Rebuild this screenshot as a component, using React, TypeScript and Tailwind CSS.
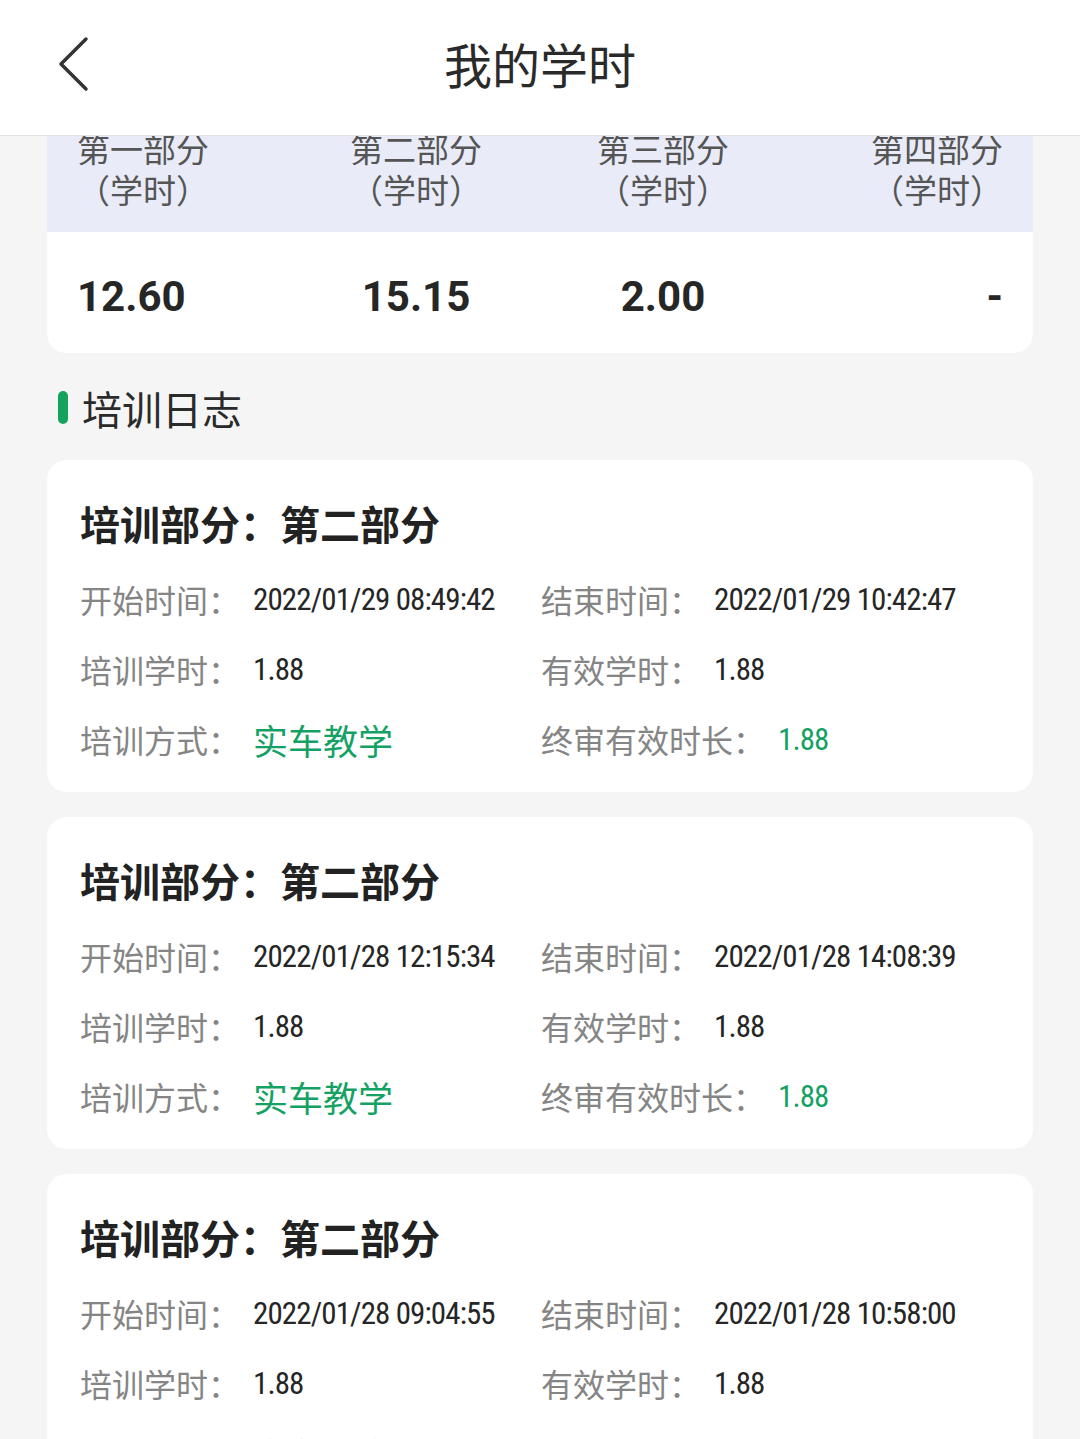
import React from "react";

const CJK = '"Noto Sans CJK SC", "Noto Sans", sans-serif';
const NUM = '"Roboto Condensed", "Liberation Sans Narrow", "DejaVu Sans Condensed", Roboto, "Noto Sans CJK SC", sans-serif';

type Log = { start: string; end: string; hours: string; valid: string; mode: string; final: string };

const logs: Log[] = [
  { start: "2022/01/29 08:49:42", end: "2022/01/29 10:42:47", hours: "1.88", valid: "1.88", mode: "实车教学", final: "1.88" },
  { start: "2022/01/28 12:15:34", end: "2022/01/28 14:08:39", hours: "1.88", valid: "1.88", mode: "实车教学", final: "1.88" },
  { start: "2022/01/28 09:04:55", end: "2022/01/28 10:58:00", hours: "1.88", valid: "1.88", mode: "实车教学", final: "1.88" },
];

function Field({ label, value, green, numeric = true }: { label: string; value: string; green?: boolean; numeric?: boolean }) {
  return (
    <div className="flex h-[70px] items-center whitespace-nowrap">
      <span className="text-[32px] leading-none text-[#858585]" style={{ fontFamily: CJK }}>
        {label}：
      </span>
      <span
        className={`ml-[13px] leading-none ${green ? "text-[#14a264]" : "text-[#262626]"} ${numeric ? "text-[31px] tracking-[-0.9px]" : "text-[35px]"}`}
        style={{ fontFamily: numeric ? NUM : CJK }}
      >
        {value}
      </span>
    </div>
  );
}

function LogCard({ log }: { log: Log }) {
  return (
    <div className="rounded-[20px] bg-white pl-[33px] pr-[20px] pt-[39px] pb-[18px]">
      <div className="h-[48px] text-[40px] font-bold leading-[48px] text-[#222]" style={{ fontFamily: CJK }}>
        培训部分：第二部分
      </div>
      <div className="mt-[17px] grid grid-cols-[461px_1fr]">
        <Field label="开始时间" value={log.start} />
        <Field label="结束时间" value={log.end} />
        <Field label="培训学时" value={log.hours} />
        <Field label="有效学时" value={log.valid} />
        <Field label="培训方式" value={log.mode} green numeric={false} />
        <Field label="终审有效时长" value={log.final} green />
      </div>
    </div>
  );
}

export default function App() {
  const cols = [
    { name: "第一部分", value: "12.60", align: "text-left" },
    { name: "第二部分", value: "15.15", align: "text-center" },
    { name: "第三部分", value: "2.00", align: "text-center" },
    { name: "第四部分", value: "-", align: "text-right" },
  ];
  return (
    <div className="h-[1439px] w-[1080px] overflow-hidden bg-[#f5f5f5]">
      <header className="relative z-10 flex h-[136px] items-center justify-center border-b border-[#e2e2e2] bg-white pb-[10px]">
        <svg className="absolute left-[56px] top-[36px]" width="36" height="58" viewBox="0 0 36 58" fill="none">
          <path d="M30 3 L5 28 L30 53" stroke="#333" strokeWidth="3.5" strokeLinecap="round" strokeLinejoin="round" />
        </svg>
        <h1 className="text-[48px] leading-none text-[#2a2a2a]" style={{ fontFamily: CJK }}>
          我的学时
        </h1>
      </header>

      <main className="px-[47px]">
        <div className="-mt-[22px] overflow-hidden rounded-b-[20px] bg-white">
          <div className="grid grid-cols-[200px_278px_216px_1fr] bg-[#e9ecf8] px-[30px] pt-[14px] pb-[22px]">
            {cols.map((c) => (
              <div key={c.name} className={`${c.align} flex flex-col text-[33px] text-[#555]`} style={{ fontFamily: CJK }}>
                <div className="h-[41px] leading-[41px]">{c.name}</div>
                <div className="h-[41px] leading-[41px]">（学时）</div>
              </div>
            ))}
          </div>
          <div className="grid h-[121px] grid-cols-[200px_278px_216px_1fr] items-center px-[30px] pt-[8px]">
            {cols.map((c) => (
              <div key={c.name} className={`${c.align} text-[42px] font-bold leading-none text-[#262626]`} style={{ fontFamily: 'Roboto, "Liberation Sans", sans-serif' }}>
                {c.value}
              </div>
            ))}
          </div>
        </div>

        <div className="flex h-[107px] items-center pt-[2px]">
          <span className="ml-[11px] h-[33px] w-[10px] rounded-full bg-[#14a35c]" />
          <span className="ml-[14px] text-[40px] leading-none text-[#2a2a2a]" style={{ fontFamily: CJK }}>
            培训日志
          </span>
        </div>

        <div className="flex flex-col gap-[25px]">
          {logs.map((l, i) => (
            <LogCard key={i} log={l} />
          ))}
        </div>
      </main>
    </div>
  );
}
